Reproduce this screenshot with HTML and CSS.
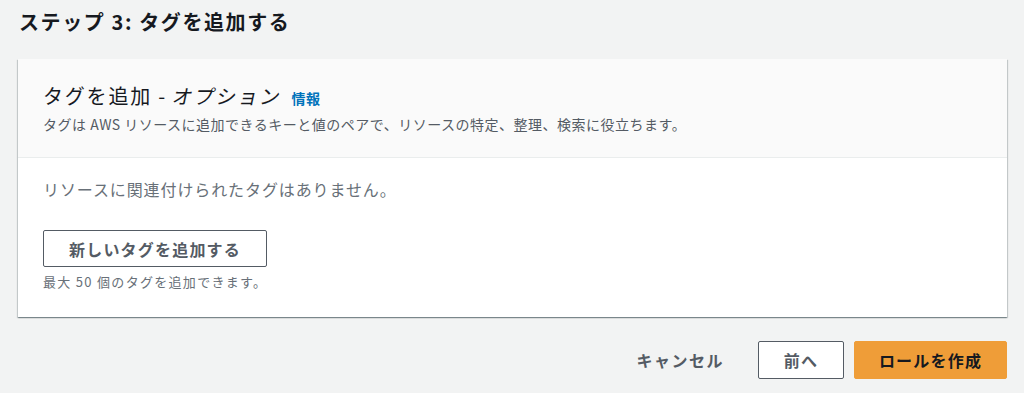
FILE: index.html
```html
<!DOCTYPE html>
<html lang="ja">
<head>
    <meta charset="UTF-8">
    <title>ステップ 3: タグを追加する</title>
    <link rel="stylesheet" href="styles.css">
</head>
<body>
    <h1 class="page-title">ステップ 3: タグを追加する</h1>

    <div class="card">
        <div class="card-header">
            <h2>タグを追加 - <em>オプション</em> <a href="#" class="info">情報</a></h2>
            <p class="desc">タグは AWS リソースに追加できるキーと値のペアで、リソースの特定、整理、検索に役立ちます。</p>
        </div>
        <div class="card-body">
            <p class="empty">リソースに関連付けられたタグはありません。</p>
            <button class="btn">新しいタグを追加する</button>
            <p class="hint">最大 50 個のタグを追加できます。</p>
        </div>
    </div>

    <div class="actions">
        <button class="btn-link">キャンセル</button>
        <button class="btn btn-small">前へ</button>
        <button class="btn btn-primary">ロールを作成</button>
    </div>
</body>
</html>
```

FILE: styles.css
```css
body {
    margin: 0;
    padding: 0 17px 0 18px;
    background: #f2f3f3;
    font-family: "Noto Sans CJK JP", "Noto Sans", sans-serif;
    color: #16191f;
}
.page-title {
    margin: 0;
    padding: 8px 0 0 1px;
    height: 59px;
    box-sizing: border-box;
    font-size: 20px;
    line-height: 28px;
    font-weight: bold;
    letter-spacing: 1.6px;
}
.card {
    background: white;
    box-shadow: 0 1px 1px 0 rgba(0,28,36,0.3), 1px 1px 1px 0 rgba(0,28,36,0.15), -1px 1px 1px 0 rgba(0,28,36,0.15);
}
.card-header {
    background: #fafafa;
    border-bottom: 1px solid #eaeded;
    padding: 22px 25px 0;
    height: 99px;
    box-sizing: border-box;
}
.card-header h2 {
    margin: 0;
    font-size: 20px;
    line-height: 30px;
    font-weight: normal;
    letter-spacing: 1.8px;
}
.card-header em {
    display: inline-block;
    font-style: normal;
    transform: skewX(-12deg);
}
.info {
    color: #0073bb;
    font-size: 14px;
    font-weight: bold;
    text-decoration: none;
    letter-spacing: 0.5px;
    margin-left: 3px;
}
.desc {
    margin: 1px 0 0;
    font-size: 14px;
    line-height: 20px;
    color: #545b64;
    letter-spacing: 0.5px;
}
.card-body {
    padding: 19px 25px 26px;
}
.empty {
    margin: 0 0 29px;
    font-size: 16px;
    line-height: 24px;
    color: #687078;
    letter-spacing: 0.9px;
}
.btn {
    background: white;
    border: 1px solid #545b64;
    border-radius: 2px;
    font-family: inherit;
    font-size: 16px;
    font-weight: bold;
    color: #545b64;
    height: 38px;
    padding: 0 24px;
    letter-spacing: 1.2px;
    cursor: pointer;
}
.card-body .btn {
    width: 224px;
    height: 37px;
}
.hint {
    margin: 6px 0 0;
    font-size: 13px;
    line-height: 18px;
    color: #687078;
    letter-spacing: 1.3px;
}
.actions {
    display: flex;
    justify-content: flex-end;
    align-items: center;
    gap: 10px;
    margin-top: 24px;
}
.btn-link {
    background: none;
    border: none;
    font-family: inherit;
    font-size: 16px;
    font-weight: bold;
    color: #545b64;
    padding: 0 20px;
    margin-right: 4px;
    letter-spacing: 1.5px;
}
.btn-small {
    width: 86px;
    padding: 0;
}
.btn-primary {
    width: 153px;
    padding: 0;
    background: #ef9d38;
    border-color: #ef9d38;
    color: #16191f;
}
```
